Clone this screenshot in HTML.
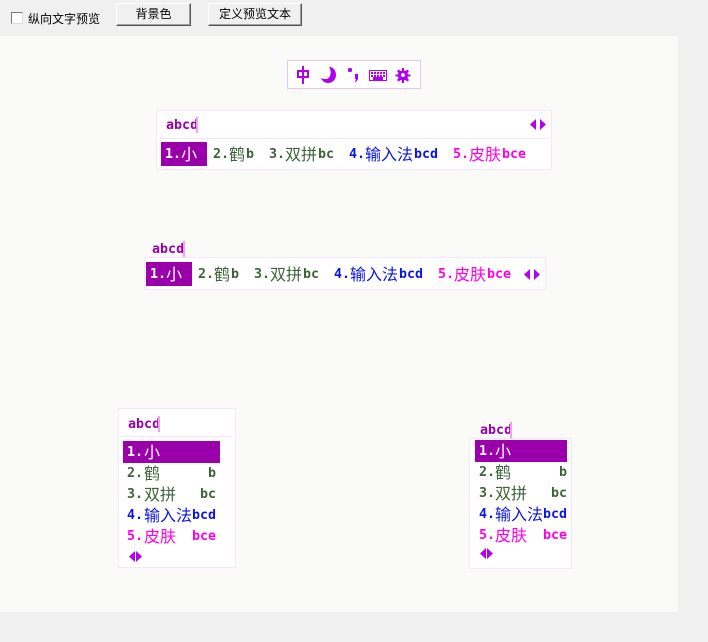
<!DOCTYPE html>
<html><head><meta charset="utf-8">
<style>
html,body{margin:0;padding:0;width:708px;height:642px;overflow:hidden;background:#f0f0f0}
body{position:relative;font-family:"Liberation Sans","WenQuanYi Zen Hei","Noto Sans CJK SC",sans-serif}
div,span,button{position:absolute;box-sizing:border-box}
.p{left:0;top:36px;width:678px;height:576px;background:#fafaf8}
.btn{background:#f0f0f0;border:1px solid;border-color:#fff #555 #555 #fff;box-shadow:inset -1px -1px 0 #a0a0a0;font-size:12px;color:#000;text-align:center;line-height:21px;height:23px;top:3px}
.box{background:#fff;border:1px solid #f6e6fc}
.t{white-space:nowrap;line-height:20px;height:20px}
.l{font:bold 13.33px/20px "DejaVu Sans Mono","Liberation Mono",monospace;white-space:nowrap;height:20px;margin-top:1px}
.c{font:16px/20px "WenQuanYi Zen Hei","Noto Sans CJK SC",sans-serif;white-space:nowrap;height:20px;margin-top:-1px}
.w{color:#fff}.g{color:#3c6438}.b{color:#0a14e6}.m{color:#ff00e6}.u{color:#9900aa}
.hi{background:#9900aa}
.caret{background:#f0a0fa;width:2px;height:16px}
svg{position:absolute;overflow:visible}
</style></head><body>
<div class="p"></div>

<div style="left:11px;top:12px;width:12px;height:12px;background:#fff;border:1px solid;border-color:#777 #ddd #ddd #777"></div>
<div class="t" style="left:28px;top:9px;font-size:12px;color:#000">纵向文字预览</div>
<div class="btn" style="left:116px;width:75px">背景色</div>
<div class="btn" style="left:208px;width:94px">定义预览文本</div>

<div style="left:287px;top:60px;width:134px;height:29px;background:#fff;border:1px solid #e0c8f0"></div>
<svg style="left:0;top:0" width="708" height="642" viewBox="0 0 708 642">
<g fill="#b000f0">
<path d="M297 70h12v8h-12zM299 72v4h8v-4z" fill-rule="evenodd"/><rect x="302" y="66" width="2" height="18"/>
<path d="M329 67c5 0 7 4 7 8c0 5-4 8-8 8c-3 0-6-2-7-5c4 2 8 1 9-2c1-3 1-6-1-9z" fill="#b000e8"/>
<rect x="348" y="68" width="4" height="4" rx="1.5"/><path d="M355 74h3v5l-2 3h-1l1-3h-1z"/>
<path d="M369 70h18v11h-18zM370 71v9h16v-9z" fill-rule="evenodd"/>
<path d="M371 72h2v2h-2zM374 72h2v2h-2zM377 72h2v2h-2zM380 72h2v2h-2zM383 72h2v2h-2zM371 75h2v2h-2zM374 75h2v2h-2zM377 75h2v2h-2zM380 75h2v2h-2zM383 75h2v2h-2zM373 77h10v3h-10z"/>
<path d="M402 68h2v2.500l1.500 .5 2-1.500 1.500 1.500-1.500 2 .5 1.500h2.500v2h-2.500l-.5 1.500 1.500 2-1.500 1.500-2-1.500-1.500 .5v2.500h-2v-2.500l-1.500-.5-2 1.500-1.500-1.500 1.500-2-.5-1.500h-2.500v-2h2.500l.5-1.500-1.500-2 1.500-1.500 2 1.500 1.500-.5zM403 73a2 2 0 1 0 .01 0z" fill-rule="evenodd"/>
</g>
</svg>

<!-- Horizontal 1 -->
<div class="box" style="left:156px;top:110px;width:396px;height:60px"></div>
<div style="left:159px;top:138px;width:390px;height:1px;background:#f6e6fc"></div>
<div class="l u" style="left:166px;top:115px">abcd</div>
<div class="caret" style="left:196px;top:117px"></div>
<div class="hi" style="left:161px;top:142px;width:46px;height:24px"></div>
<div class="l w" style="left:165px;top:144px">1.</div><div class="c w" style="left:181px;top:144px">小</div>
<div class="l g" style="left:213px;top:144px">2.</div><div class="c g" style="left:229px;top:144px">鹤</div><div class="l g" style="left:246px;top:144px">b</div>
<div class="l g" style="left:269px;top:144px">3.</div><div class="c g" style="left:285px;top:144px">双拼</div><div class="l g" style="left:318px;top:144px">bc</div>
<div class="l b" style="left:349px;top:144px">4.</div><div class="c b" style="left:365px;top:144px">输入法</div><div class="l b" style="left:414px;top:144px">bcd</div>
<div class="l m" style="left:453px;top:144px">5.</div><div class="c m" style="left:469px;top:144px">皮肤</div><div class="l m" style="left:502px;top:144px">bce</div>
<svg style="left:0;top:0" width="708" height="642"><path fill="#b400f0" d="M536 119v11l-6-5.500zM540 119v11l6-5.500z"/></svg>

<!-- Horizontal 2 -->
<div class="l u" style="left:152px;top:239px">abcd</div>
<div class="caret" style="left:183px;top:241px"></div>
<div class="box" style="left:144px;top:257px;width:402px;height:33px"></div>
<div class="hi" style="left:146px;top:262px;width:46px;height:24px"></div>
<div class="l w" style="left:150px;top:264px">1.</div><div class="c w" style="left:166px;top:264px">小</div>
<div class="l g" style="left:198px;top:264px">2.</div><div class="c g" style="left:214px;top:264px">鹤</div><div class="l g" style="left:231px;top:264px">b</div>
<div class="l g" style="left:254px;top:264px">3.</div><div class="c g" style="left:270px;top:264px">双拼</div><div class="l g" style="left:303px;top:264px">bc</div>
<div class="l b" style="left:334px;top:264px">4.</div><div class="c b" style="left:350px;top:264px">输入法</div><div class="l b" style="left:399px;top:264px">bcd</div>
<div class="l m" style="left:438px;top:264px">5.</div><div class="c m" style="left:454px;top:264px">皮肤</div><div class="l m" style="left:487px;top:264px">bce</div>
<svg style="left:0;top:0" width="708" height="642"><path fill="#b400f0" d="M530 269v11l-6-5.500zM534 269v11l6-5.500z"/></svg>

<!-- Vertical 1 -->
<div class="box" style="left:118px;top:408px;width:118px;height:160px"></div>
<div style="left:121px;top:436px;width:112px;height:1px;background:#f6e6fc"></div>
<div class="l u" style="left:128px;top:414px">abcd</div>
<div class="caret" style="left:158px;top:416px"></div>
<div class="hi" style="left:123px;top:441px;width:97px;height:22px"></div>
<div class="l w" style="left:127px;top:442px">1.</div><div class="c w" style="left:144px;top:442px">小</div>
<div class="l g" style="left:127px;top:463px">2.</div><div class="c g" style="left:144px;top:463px">鹤</div><div class="l g" style="left:208px;top:463px">b</div>
<div class="l g" style="left:127px;top:484px">3.</div><div class="c g" style="left:144px;top:484px">双拼</div><div class="l g" style="left:200px;top:484px">bc</div>
<div class="l b" style="left:127px;top:505px">4.</div><div class="c b" style="left:144px;top:505px">输入法</div><div class="l b" style="left:192px;top:505px">bcd</div>
<div class="l m" style="left:127px;top:526px">5.</div><div class="c m" style="left:144px;top:526px">皮肤</div><div class="l m" style="left:192px;top:526px">bce</div>
<svg style="left:0;top:0" width="708" height="642"><path fill="#b400f0" d="M135 551v11l-6-5.500zM136 551v11l6-5.500z"/></svg>

<!-- Vertical 2 -->
<div class="l u" style="left:480px;top:420px">abcd</div>
<div class="caret" style="left:510px;top:422px"></div>
<div class="box" style="left:469px;top:438px;width:103px;height:131px"></div>
<div class="hi" style="left:475px;top:440px;width:92px;height:22px"></div>
<div class="l w" style="left:479px;top:441px">1.</div><div class="c w" style="left:495px;top:441px">小</div>
<div class="l g" style="left:479px;top:462px">2.</div><div class="c g" style="left:495px;top:462px">鹤</div><div class="l g" style="left:559px;top:462px">b</div>
<div class="l g" style="left:479px;top:483px">3.</div><div class="c g" style="left:495px;top:483px">双拼</div><div class="l g" style="left:551px;top:483px">bc</div>
<div class="l b" style="left:479px;top:504px">4.</div><div class="c b" style="left:495px;top:504px">输入法</div><div class="l b" style="left:543px;top:504px">bcd</div>
<div class="l m" style="left:479px;top:525px">5.</div><div class="c m" style="left:495px;top:525px">皮肤</div><div class="l m" style="left:543px;top:525px">bce</div>
<svg style="left:0;top:0" width="708" height="642"><path fill="#b400f0" d="M486 548v11l-6-5.500zM487 548v11l6-5.500z"/></svg>
</body></html>
